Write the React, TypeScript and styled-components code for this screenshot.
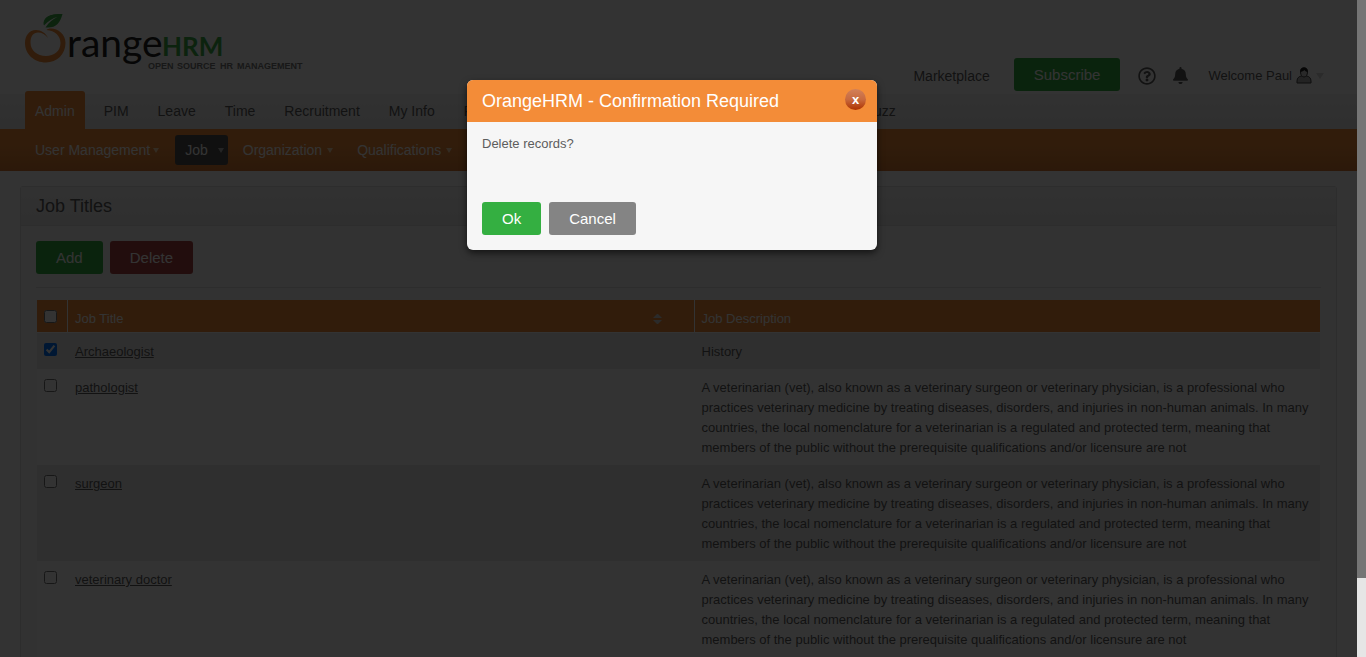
import React from "react";
import styled, { createGlobalStyle } from "styled-components";
import { FaBell, FaRegQuestionCircle } from "react-icons/fa";

const GlobalStyle = createGlobalStyle`
  * { box-sizing: border-box; }
  body {
    margin: 0;
    background: #fff;
    color: #5d5d5d;
    font-family: "Liberation Sans", Arial, sans-serif;
    font-size: 13px;
    line-height: 20px;
  }
`;

const Shell = styled.div`
  display: flex;
  height: 100vh;
  overflow: hidden;
`;

const Page = styled.div`
  position: relative;
  flex: 1;
  min-width: 0;
  overflow: hidden;
`;

const ScrollTrack = styled.div`
  width: 9px;
  background: #e6e6e6;
`;

const ScrollThumb = styled.div`
  height: 88%;
  background: #757575;
`;

const Header = styled.header`
  display: flex;
  justify-content: space-between;
  align-items: flex-end;
  height: 91px;
  padding: 0 33px 0 24px;
`;

const Logo = styled.svg`
  display: block;
  align-self: flex-start;
`;

const Tools = styled.div`
  display: flex;
  align-items: center;
`;

const PlainLink = styled.a`
  padding-top: 2px;
  color: #5d5d5d;
  font-size: 14px;
  text-decoration: none;
`;

const Button = styled.button<{ $tone: string }>`
  height: 33px;
  padding: 0 20px;
  border: 0;
  border-radius: 3px;
  background: ${(p) => p.$tone};
  color: #fff;
  font: 15px "Liberation Sans", Arial, sans-serif;
  cursor: pointer;
`;

const Subscribe = styled(Button)`
  margin: 0 18px 0 24px;
`;

const IconButton = styled.button<{ $after: number }>`
  display: flex;
  padding: 2px 0 0;
  margin-right: ${(p) => p.$after}px;
  border: 0;
  background: none;
  color: #5d5d5d;
`;

const UserMenu = styled.a`
  display: flex;
  align-items: center;
  gap: 4px;
  padding-top: 2px;
  color: #5d5d5d;
  text-decoration: none;
`;

const TabBar = styled.nav`
  display: flex;
  gap: 9px;
  height: 38px;
  padding: 0 25px;
  background: linear-gradient(#fff 3px, #f6f6f6 3px, #e8e8e8);
`;

const Tab = styled.a<{ $active?: boolean }>`
  padding: 0 10px;
  border-radius: 3px 3px 0 0;
  background: ${(p) => (p.$active ? "#f28c38" : "transparent")};
  color: ${(p) => (p.$active ? "#fff" : "#5d5d5d")};
  font-size: 14px;
  line-height: 40px;
  text-decoration: none;
`;

const SubBar = styled.nav`
  display: flex;
  align-items: center;
  gap: 5px;
  height: 42px;
  padding: 0 25px;
  background: linear-gradient(#f28c38 40%, #d87a34);
`;

const SubItem = styled.a<{ $active?: boolean }>`
  position: relative;
  height: 30px;
  padding: 0 20px 0 10px;
  border-radius: 3px;
  background: ${(p) => (p.$active ? "#515151" : "transparent")};
  color: #fff;
  font-size: 14px;
  line-height: 30px;
  text-decoration: none;
`;

const Caret = styled.span<{ $color: string; $size: number }>`
  border: ${(p) => p.$size}px solid transparent;
  border-top: ${(p) => p.$size + 2}px solid ${(p) => p.$color};
  border-bottom: 0;
`;

const SubCaret = styled(Caret)`
  position: absolute;
  right: 8%;
  top: 13px;
`;

const Panel = styled.main`
  margin: 15px 20px;
  border: 1px solid #dedede;
  border-radius: 3px;
  background: #f7f7f7;
`;

const PanelTitle = styled.h1`
  margin: 0;
  height: 39px;
  padding: 0 15px;
  border-bottom: 1px solid #dedede;
  background: linear-gradient(#f5f5f5, #e9e9e9);
  font-size: 18px;
  font-weight: 400;
  line-height: 38px;
`;

const PanelBody = styled.div`
  padding: 15px;
`;

const Actions = styled.div`
  display: flex;
  gap: 7px;
`;

const TableActions = styled(Actions)`
  padding-bottom: 13px;
  margin-bottom: 12px;
  border-bottom: 1px solid #dedede;
`;

const TableWrap = styled.div`
  padding: 0 1px;
`;

const Table = styled.table`
  width: 100%;
  table-layout: fixed;
  border-collapse: separate;
  border-spacing: 0;
`;

const HeadCell = styled.th<{ $width?: string }>`
  width: ${(p) => p.$width ?? "auto"};
  height: 33px;
  padding: 5px 7px 0;
  border-left: 1px solid #fff;
  border-bottom: 1px solid #fff;
  background: #f28c38;
  color: #fff;
  font-weight: 400;
  text-align: left;
  &:first-child {
    border-left: 0;
    padding: 0 7px;
  }
`;

const HeadLabel = styled.div`
  display: flex;
  align-items: center;
  justify-content: space-between;
  padding-right: 25px;
`;

const Row = styled.tr`
  background: #fff;
  &:nth-child(odd) {
    background: #ebebeb;
  }
`;

const Cell = styled.td`
  padding: 9px 7px 7px 8px;
  vertical-align: top;
  &:first-child {
    padding-left: 7px;
  }
`;

const CheckBox = styled.input`
  display: block;
  width: 13px;
  height: 13px;
  margin: 1px 0 0;
`;

const TitleLink = styled.a`
  color: #5d5d5d;
  text-decoration: underline;
`;

const Overlay = styled.div`
  position: absolute;
  inset: 0;
  display: flex;
  justify-content: center;
  align-items: flex-start;
  padding: 80px 13px 0 0;
  background: rgba(0, 0, 0, 0.8);
`;

const Dialog = styled.section`
  width: 410px;
  border-radius: 6px;
  overflow: hidden;
  background: #f6f6f6;
  box-shadow: 0 3px 7px rgba(0, 0, 0, 0.6);
`;

const DialogHeader = styled.header`
  display: flex;
  align-items: center;
  justify-content: space-between;
  height: 42px;
  padding: 0 11px 0 15px;
  background: #f38c38;
`;

const DialogTitle = styled.h2`
  margin: 0;
  color: #fff;
  font-size: 18px;
  font-weight: 400;
`;

const CloseButton = styled.button`
  width: 21px;
  height: 21px;
  margin-bottom: 3px;
  padding: 0;
  border: 0;
  border-radius: 50%;
  background: linear-gradient(#d28058, #c8693e 50%, #ad3200);
  color: #fff;
  font: bold 13px/18px "Liberation Sans", Arial, sans-serif;
`;

const DialogBody = styled.div`
  padding: 12px 15px 15px;
`;

const DialogActions = styled(Actions)`
  gap: 8px;
`;

const Message = styled.p`
  margin: 0;
  height: 68px;
`;

const tabs = ["Admin", "PIM", "Leave", "Time", "Recruitment", "My Info", "Performance", "Dashboard", "Directory", "Maintenance", "Buzz"];
const subItems = ["User Management", "Job", "Organization", "Qualifications", "Nationalities", "Configuration"];

const vet =
  "A veterinarian (vet), also known as a veterinary surgeon or veterinary physician, is a professional who practices veterinary medicine by treating diseases, disorders, and injuries in non-human animals. In many countries, the local nomenclature for a veterinarian is a regulated and protected term, meaning that members of the public without the prerequisite qualifications and/or licensure are not";

const jobs = [
  { title: "Archaeologist", text: "History", checked: true },
  { title: "pathologist", text: vet, checked: false },
  { title: "surgeon", text: vet, checked: false },
  { title: "veterinary doctor", text: vet, checked: false },
];

function BrandLogo() {
  return (
    <Logo width="290" height="76" viewBox="24 0 290 76" role="img" aria-label="OrangeHRM">
      <path
        fill="#f28c38"
        d="M48 38C46 33 41 30 36 30C29 30 25 36 25 43C25 54 34 62.500 46 62.500C57 62.500 65.500 54 65.500 43C65.500 34 58 28.500 51 28.500C49 28.500 47.500 29 46.500 30C55 30.500 60.500 36 60.500 43C60.500 51 54 56 46 56C37 56 30.500 50.500 30.500 42.500C30.500 36 33.500 32.500 38 32.500C42 32.500 45.500 34.500 48 38Z"
      />
      <path fill="#3fae49" d="M43.500 25C43 17 49 14 62.500 14C55 15.500 47 20 43.500 25Z" />
      <path fill="#3fae49" d="M45.500 27.500C49 22 53 19 57.500 17C53 18 48 21 44 25.500C44 16 50 14 62.500 14C60 23 56 28.500 45.500 27.500Z" />
      <text x="67" y="57" fontFamily="Lato, sans-serif" fontSize="39" fill="#222">range</text>
      <text x="162" y="56" fontFamily="Lato, sans-serif" fontWeight="700" fontSize="26" fill="#3fae49">HRM</text>
      <text y="69" fontFamily="Liberation Sans, Arial, sans-serif" fontWeight="700" fontSize="9" fill="#777">
        <tspan x="148">OPEN </tspan>
        <tspan x="177">SOURCE </tspan>
        <tspan x="220">HR </tspan>
        <tspan x="237">MANAGEMENT</tspan>
      </text>
    </Logo>
  );
}

function UserIcon() {
  return (
    <svg width="16" height="17" viewBox="0 0 16 17" aria-hidden="true">
      <path d="M1 16V14C1 11 3 9.500 5 9H11C13 9.500 15 11 15 14V16Z" fill="#b0b0b0" stroke="#444" />
      <path d="M4.500 5C4.500 2 6 .8 8 .8S11.500 2 11.500 5C11.500 8 10 10 8 10S4.500 8 4.500 5Z" fill="#ccc" stroke="#444" />
      <path d="M4.300 5C4 1.500 6 .5 8 .5S12 1.500 11.700 5C10 4.800 9 4 8.500 3C7.500 4.200 6 4.800 4.300 5Z" fill="#222" />
    </svg>
  );
}

function SortIcon() {
  return (
    <svg width="9" height="10" viewBox="0 0 9 10" aria-hidden="true">
      <path d="M0 4L4 0H5L9 4ZM0 6H9L5 10H4Z" fill="#d8d8d8" />
    </svg>
  );
}

export default function App() {
  return (
    <Shell>
      <GlobalStyle />
      <Page>
        <Header>
          <BrandLogo />
          <Tools>
            <PlainLink href="#marketplace">Marketplace</PlainLink>
            <Subscribe type="button" $tone="#34af41">Subscribe</Subscribe>
            <IconButton type="button" aria-label="Help" $after={16}>
              <FaRegQuestionCircle size={18} />
            </IconButton>
            <IconButton type="button" aria-label="Notifications" $after={19}>
              <FaBell size={17} />
            </IconButton>
            <UserMenu href="#account">
              Welcome Paul
              <UserIcon />
              <Caret $color="#d6d6d6" $size={4} />
            </UserMenu>
          </Tools>
        </Header>
        <TabBar aria-label="Modules">
          {tabs.map((t) => (
            <Tab key={t} href={"#" + t} $active={t === "Admin"}>{t}</Tab>
          ))}
        </TabBar>
        <SubBar aria-label="Admin">
          {subItems.map((t) => (
            <SubItem key={t} href={"#" + t} $active={t === "Job"}>
              {t}
              {t !== "Nationalities" && <SubCaret $color={t === "Job" ? "#b4b4b4" : "#ffd9b0"} $size={3} />}
            </SubItem>
          ))}
        </SubBar>
        <Panel>
          <PanelTitle>Job Titles</PanelTitle>
          <PanelBody>
            <TableActions>
              <Button type="button" $tone="#34af41">Add</Button>
              <Button type="button" $tone="#aa4442">Delete</Button>
            </TableActions>
            <TableWrap>
              <Table>
                <thead>
                  <tr>
                    <HeadCell $width="30px">
                      <CheckBox type="checkbox" aria-label="Select all job titles" />
                    </HeadCell>
                    <HeadCell>
                      <HeadLabel>Job Title <SortIcon /></HeadLabel>
                    </HeadCell>
                    <HeadCell>Job Description</HeadCell>
                  </tr>
                </thead>
                <tbody>
                  {jobs.map((j) => (
                    <Row key={j.title}>
                      <Cell>
                        <CheckBox type="checkbox" defaultChecked={j.checked} aria-label={"Select " + j.title} />
                      </Cell>
                      <Cell><TitleLink href={"#" + j.title}>{j.title}</TitleLink></Cell>
                      <Cell>{j.text}</Cell>
                    </Row>
                  ))}
                </tbody>
              </Table>
            </TableWrap>
          </PanelBody>
        </Panel>
        <Overlay>
          <Dialog role="dialog" aria-modal="true" aria-labelledby="confirm-title">
            <DialogHeader>
              <DialogTitle id="confirm-title">OrangeHRM - Confirmation Required</DialogTitle>
              <CloseButton type="button" aria-label="Close">x</CloseButton>
            </DialogHeader>
            <DialogBody>
              <Message>Delete records?</Message>
              <DialogActions>
                <Button type="button" $tone="#34af41">Ok</Button>
                <Button type="button" $tone="#848484">Cancel</Button>
              </DialogActions>
            </DialogBody>
          </Dialog>
        </Overlay>
      </Page>
      <ScrollTrack>
        <ScrollThumb />
      </ScrollTrack>
    </Shell>
  );
}
